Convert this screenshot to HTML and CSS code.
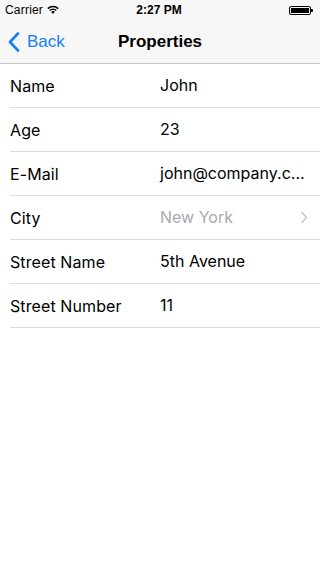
FILE: index.html
```html
<!DOCTYPE html>
<html>
<head>
<meta charset="utf-8">
<link rel="stylesheet" href="styles.css">
</head>
<body>
<div class="header">
  <div class="status">
    <div class="status-left">
      <span class="carrier">Carrier</span>
      <svg class="wifi" width="12" height="9" viewBox="0 0 12 9">
        <path d="M0.3 3.1 A8 8 0 0 1 11.7 3.1 L10.6 4.2 A6.4 6.4 0 0 0 1.4 4.2 Z" fill="#000"/>
        <path d="M2.2 5.0 A5.4 5.4 0 0 1 9.8 5.0 L8.7 6.1 A3.8 3.8 0 0 0 3.3 6.1 Z" fill="#000"/>
        <path d="M4.1 6.9 A2.7 2.7 0 0 1 7.9 6.9 L6 8.8 Z" fill="#000"/>
      </svg>
    </div>
    <div class="time">2:27 PM</div>
    <div class="status-right">
      <div class="battery"><div class="battery-fill"></div></div>
      <div class="battery-nub"></div>
    </div>
  </div>
  <div class="nav">
    <div class="back">
      <svg class="back-chev" width="12" height="20" viewBox="0 0 12 20">
        <path d="M10 1.5 L2 10 L10 18.5" fill="none" stroke="#147efb" stroke-width="2.6" stroke-linecap="round" stroke-linejoin="round"/>
      </svg>
      <span class="back-text">Back</span>
    </div>
    <div class="title">Properties</div>
    <div class="spacer"></div>
  </div>
</div>
<div class="list">
  <div class="row"><div class="label">Name</div><div class="value">John</div></div>
  <div class="row"><div class="label">Age</div><div class="value">23</div></div>
  <div class="row"><div class="label">E-Mail</div><div class="value">john@company.c...</div></div>
  <div class="row"><div class="label">City</div><div class="value muted">New York</div>
    <svg class="chev" width="8" height="13" viewBox="0 0 8 13"><path d="M1.5 1 L6.5 6.5 L1.5 12" fill="none" stroke="#c7c7cc" stroke-width="1.5"/></svg>
  </div>
  <div class="row"><div class="label">Street Name</div><div class="value">5th Avenue</div></div>
  <div class="row"><div class="label">Street Number</div><div class="value">11</div></div>
</div>
</body>
</html>
```
FILE: styles.css
```css
* { box-sizing: border-box; }
html, body { margin: 0; padding: 0; }
body {
  width: 320px;
  height: 568px;
  background: #fff;
  font-family: "Liberation Sans", Arial, sans-serif;
  color: #000;
  overflow: hidden;
}
.header {
  background: #f7f7f7;
  border-bottom: 1px solid #c8c8cc;
  height: 64px;
}
.status {
  height: 20px;
  display: flex;
  align-items: center;
  justify-content: space-between;
  padding: 0 7px 0 5px;
  font-size: 12px;
}
.status-left { display: flex; align-items: center; gap: 4px; width: 80px; }
.carrier { letter-spacing: 0.2px; }
.wifi { margin-top: -1px; }
.time { font-weight: bold; font-size: 12px; }
.status-right { width: 80px; display: flex; justify-content: flex-end; align-items: center; }
.battery {
  width: 22px;
  height: 9px;
  border: 1px solid #000;
  border-radius: 2px;
  padding: 1px;
}
.battery-fill { width: 100%; height: 100%; background: #000; }
.battery-nub { width: 1.5px; height: 3px; background: #000; border-radius: 0 1px 1px 0; }
.nav {
  height: 43px;
  display: flex;
  align-items: center;
  justify-content: space-between;
}
.back {
  width: 90px;
  display: flex;
  align-items: center;
  padding-left: 8px;
  color: #147efb;
  font-size: 17px;
  gap: 7px;
}
.back-chev { flex: none; }
.title { font-weight: bold; font-size: 17px; }
.spacer { width: 90px; }
.list { padding-left: 10px; }
.row {
  height: 44px;
  border-bottom: 1px solid #dcdce0;
  display: flex;
  align-items: center;
  font-family: Inter, "Liberation Sans", sans-serif;
  font-size: 16px;
  padding-right: 12px;
}
.label { width: 150px; flex: none; padding-top: 1px; letter-spacing: 0.1px; }
.value { flex: 1; padding-bottom: 1px; white-space: nowrap; }
.muted { color: #a9a9ae; }
.chev { flex: none; }
```
